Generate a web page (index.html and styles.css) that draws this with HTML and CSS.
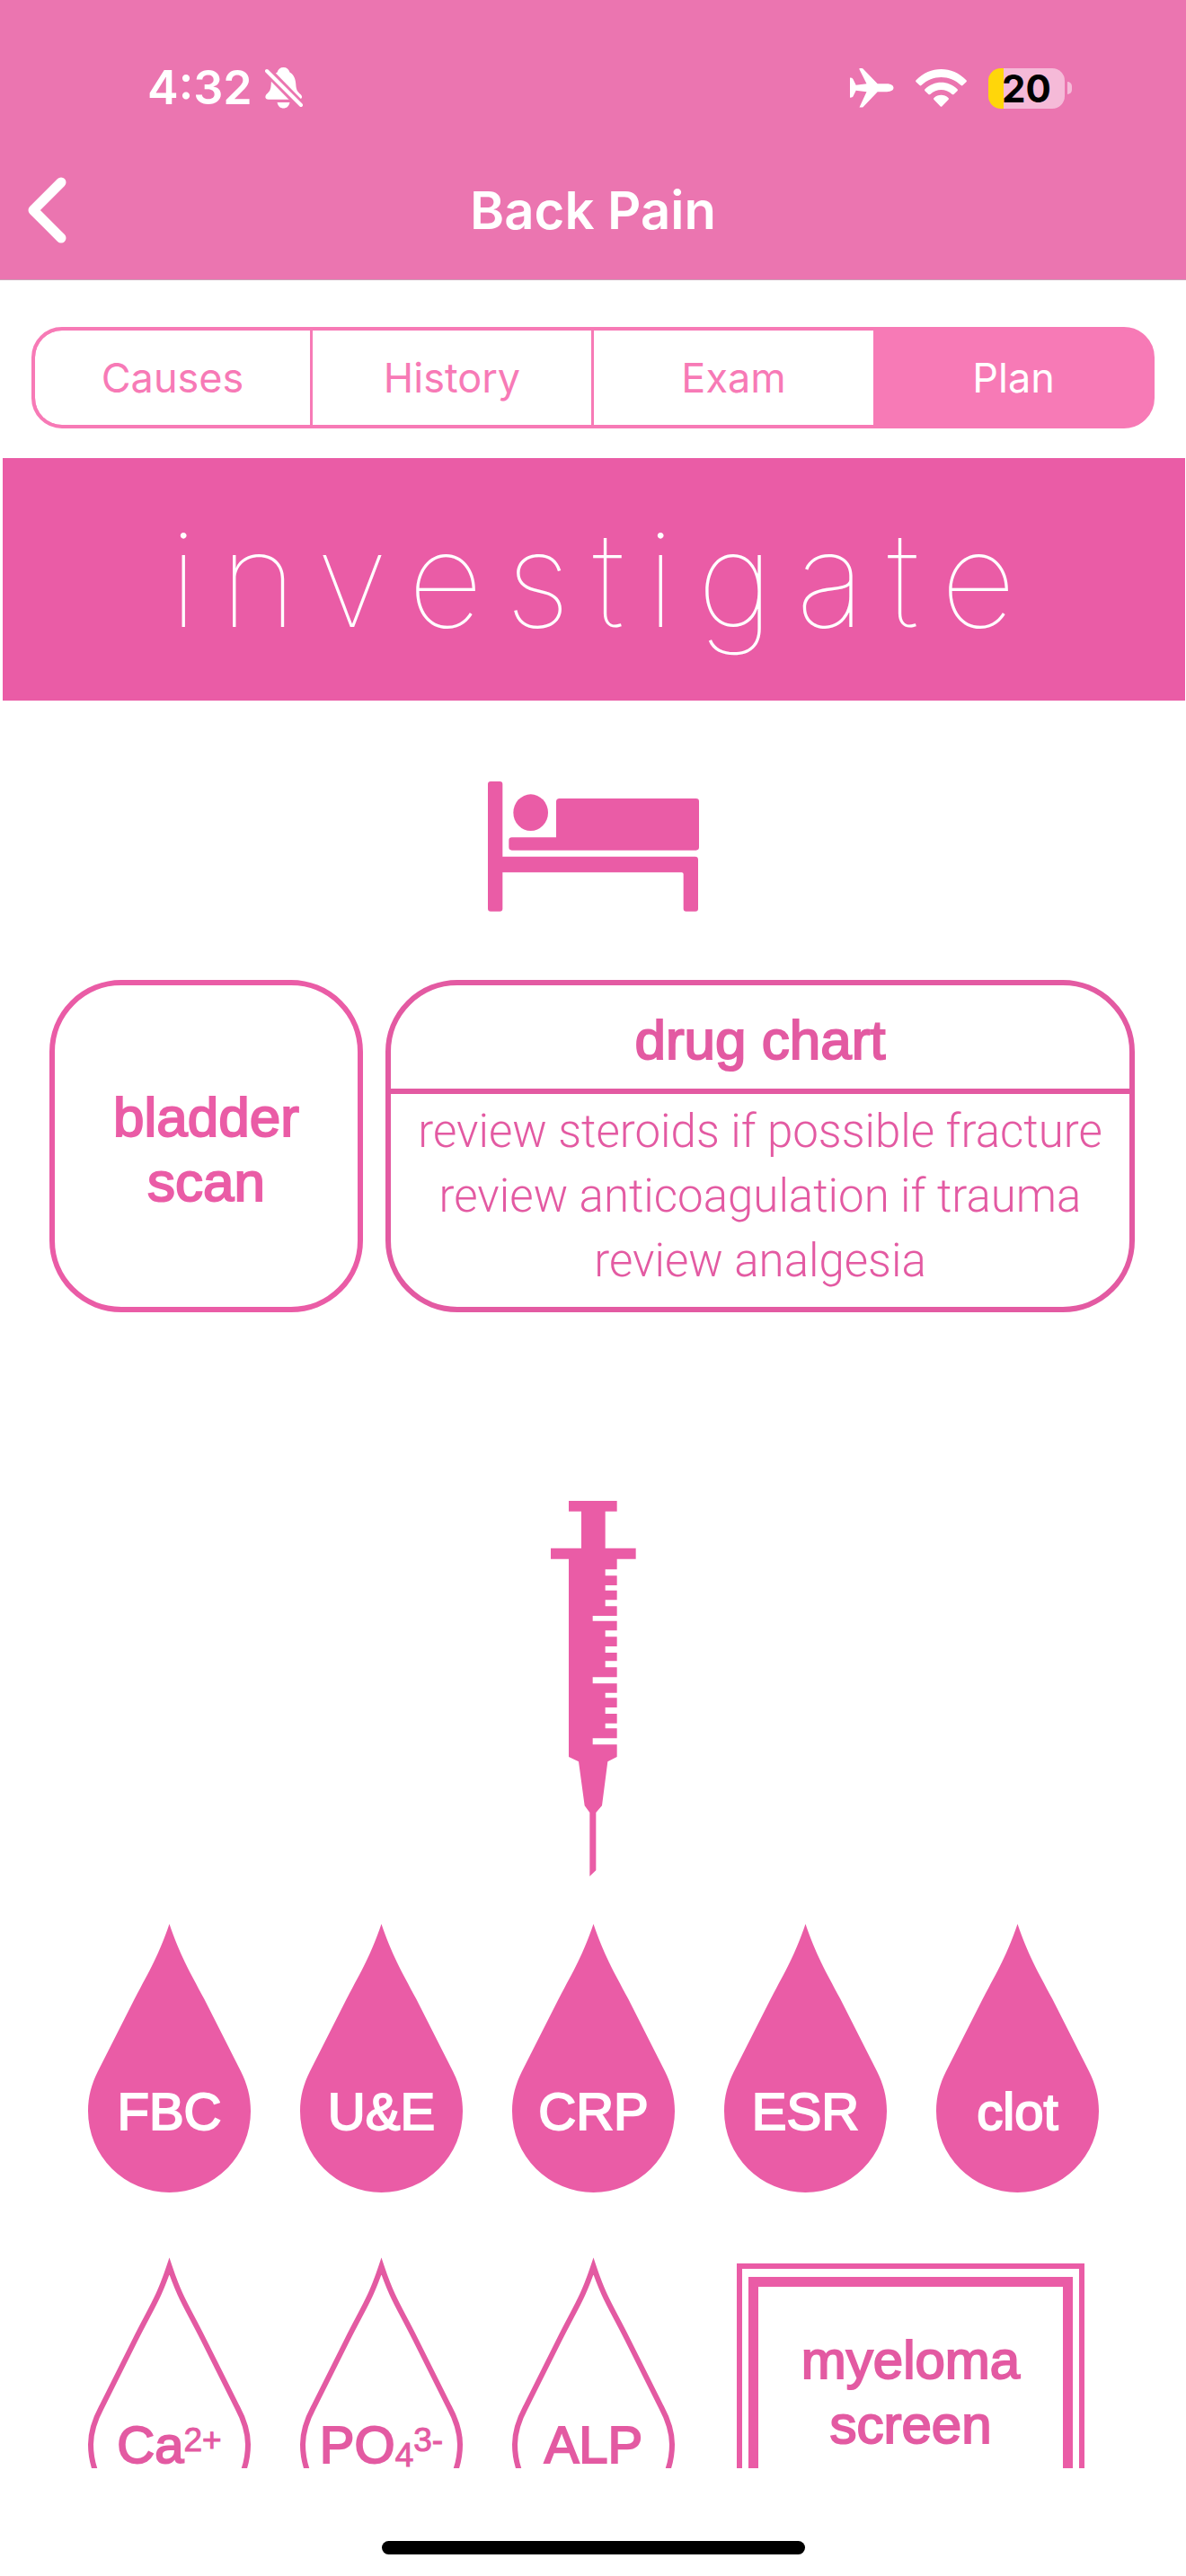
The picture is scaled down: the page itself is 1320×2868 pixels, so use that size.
FILE: index.html
```html
<!DOCTYPE html>
<html lang="en">
<head>
<meta charset="utf-8">
<meta name="viewport" content="width=device-width, initial-scale=1">
<title>Back Pain</title>
<link rel="stylesheet" href="styles.css">
</head>
<body>
<div class="app">
  <header class="header">
    <div class="status">
      <div class="status-group">
        <span class="clock">4:32</span>
        <svg class="bell" viewBox="0 0 42 46" aria-label="Silent mode">
          <path class="white" d="M20.500 0C24 0 26.500 2 27.500 5.500C32 8 34 13 34.300 19C34.600 25 36 27 39.500 30C42 32.500 41.500 35.700 37.500 35.700H4C0 35.700-.5 32.500 1.500 30C5 27 6.400 25 6.700 19C7 13 9 8 13.500 5.500C14.500 2 17 0 20.500 0ZM13.500 39H27.500C26.500 43.500 24 45.500 20.500 45.500S14.500 43.500 13.500 39Z"/>
          <path class="slash-gap" d="M0 1.500L41.500 44"/>
          <path class="slash" d="M2 4L40 42"/>
        </svg>
      </div>
      <div class="status-group status-right">
        <svg class="plane" viewBox="0 0 49 44" aria-label="Airplane mode">
          <path class="white" d="M10.500 0H13Q14.300 0 15.200 1.200L30.700 17.300H41C46 17.300 48.500 19.500 48.500 21.800S46 26.200 41 26.200H30.700L15.200 42.400Q14.300 43.600 13 43.600H10.500L18.500 26.200L6.700 24.800L3.400 31.500Q2.600 32.800 0 32.600V10.600Q2.600 10.600 3.400 12L6.700 18.800L18.500 17.300L10.500 1.200Z"/>
        </svg>
        <svg class="wifi" viewBox="0 0 57 42" aria-label="Wi-Fi">
          <path class="white" d="M.6 12.300C16-4.100 41-4.100 56.400 12.300Q57.400 13.300 56.400 14.300L52.400 18.100Q51.500 18.900 50.600 18C38 6 19 6 6.400 18Q5.500 18.900 4.600 18.100L.6 14.300Q-.4 13.300.6 12.300ZM10.500 22.300C20.500 12.200 36.500 12.200 46.500 22.300Q47.400 23.300 46.500 24.200L42.600 27.900Q41.700 28.700 40.700 27.900C33.500 21.400 23.500 21.400 16.300 27.900Q15.300 28.700 14.400 27.900L10.500 24.200Q9.600 23.300 10.500 22.300ZM20.500 32C25 27.600 32 27.600 36.500 32Q37.400 33 36.500 34L29.500 41.200Q28.500 42.200 27.500 41.200L20.500 34Q19.600 33 20.500 32Z"/>
        </svg>
        <div class="battery">
          <span class="battery-body">20</span>
          <span class="battery-nub"></span>
        </div>
      </div>
    </div>
    <div class="navbar">
      <button class="back" type="button" aria-label="Back">
        <svg class="chevron" viewBox="0 0 44 74"><path d="M38 6L7 37L38 68"/></svg>
      </button>
      <h1 class="title">Back Pain</h1>
    </div>
  </header>

  <nav class="tabs" aria-label="Sections">
    <button class="tab" type="button">Causes</button>
    <button class="tab" type="button">History</button>
    <button class="tab" type="button">Exam</button>
    <button class="tab tab-active" type="button" aria-current="page">Plan</button>
  </nav>

  <main class="content">
    <h2 class="banner">investigate</h2>

    <svg class="bed" viewBox="129 90 705 435" aria-label="Bedside">
      <rect x="129" y="90" width="49" height="434" rx="9"/>
      <ellipse cx="272" cy="194" rx="58" ry="61"/>
      <path d="M368 147H824Q834 147 834 157V310Q834 320 824 320H209Q199 320 199 310V287Q199 277 209 277H357V158Q357 147 368 147Z"/>
      <path d="M170 341H821Q831 341 831 351V515Q831 524 822 524H791Q782 524 782 515V400Q782 394 776 394H170Z"/>
    </svg>

    <div class="cards">
      <section class="card card-scan">
        <h3 class="label">bladder<br>scan</h3>
      </section>
      <section class="card card-drugs">
        <h3 class="label card-title">drug chart</h3>
        <ul class="reviews">
          <li>review steroids if possible fracture</li>
          <li>review anticoagulation if trauma</li>
          <li>review analgesia</li>
        </ul>
      </section>
    </div>

    <svg class="syringe" viewBox="160 93 285 1254" aria-label="Bloods">
      <path d="M220 93H381V128H342V251H444V287H381V322H342V343H381V375H342V392H381V424H342V445H381V477H300V494H381V526H342V547H381V579H342V600H381V628H342V649H381V682H300V703H381V734H342V751H381V783H342V804H381V836H342V853H381V886H300V907H381V948L350 964L331 1111L311 1134V1327L290 1347V1134L273 1111L253 964L220 948V287H160V251H262V128H220Z"/>
    </svg>

    <ul class="drops">
      <li class="drop drop-full">
        <svg viewBox="0 0 181 299" aria-hidden="true"><use href="#drop-fill"/></svg>
        <span class="label">FBC</span>
      </li>
      <li class="drop drop-full">
        <svg viewBox="0 0 181 299" aria-hidden="true"><use href="#drop-fill"/></svg>
        <span class="label">U&amp;E</span>
      </li>
      <li class="drop drop-full">
        <svg viewBox="0 0 181 299" aria-hidden="true"><use href="#drop-fill"/></svg>
        <span class="label">CRP</span>
      </li>
      <li class="drop drop-full">
        <svg viewBox="0 0 181 299" aria-hidden="true"><use href="#drop-fill"/></svg>
        <span class="label">ESR</span>
      </li>
      <li class="drop drop-full">
        <svg viewBox="0 0 181 299" aria-hidden="true"><use href="#drop-fill"/></svg>
        <span class="label">clot</span>
      </li>
    </ul>

    <ul class="drops drops-extra">
      <li class="drop drop-line">
        <svg viewBox="0 0 181 299" aria-hidden="true"><use href="#drop-outline"/></svg>
        <span class="label">Ca<sup>2+</sup></span>
      </li>
      <li class="drop drop-line">
        <svg viewBox="0 0 181 299" aria-hidden="true"><use href="#drop-outline"/></svg>
        <span class="label">PO<sub>4</sub><sup>3-</sup></span>
      </li>
      <li class="drop drop-line">
        <svg viewBox="0 0 181 299" aria-hidden="true"><use href="#drop-outline"/></svg>
        <span class="label">ALP</span>
      </li>
      <li class="frame">
        <div class="frame-inner"><span class="label">myeloma<br>screen</span></div>
      </li>
    </ul>
  </main>

  <footer class="home"><span class="home-bar"></span></footer>
</div>

<svg class="defs" aria-hidden="true">
  <defs>
    <path id="drop-fill" d="M90.500 0C102 34 112 51 129 83L170 164C177 178 181 192 181 208.500A90.500 90.500 0 0 1 0 208.500C0 192 4 178 11 164L52 83C69 51 79 34 90.500 0Z"/>
    <path id="drop-outline" d="M90.500 10C102 45 111 57 128 91L166 167C174 182 178 194 178 208.500A87.500 87.500 0 0 1 3 208.500C3 194 7 182 15 167L53 91C70 57 79 45 90.500 10Z"/>
  </defs>
</svg>
</body>
</html>
```
FILE: styles.css
```css
:root {
  --header: #eb75b0;
  --tab: #f77ab6;
  --pink: #ea5ca6;
  --pink-deep: #e35aa2;
  --ui: Inter, "Liberation Sans", sans-serif;
  --art: "Liberation Sans", Arial, sans-serif;
}

* {
  box-sizing: border-box;
}

body {
  margin: 0;
  background: #fff;
  font-family: var(--ui);
}

h1, h2, h3, ul {
  margin: 0;
  padding: 0;
  list-style: none;
}

button {
  margin: 0;
  padding: 0;
  border: 0;
  background: none;
  font: inherit;
  color: inherit;
}

svg {
  display: block;
}

.defs {
  position: absolute;
  width: 0;
  height: 0;
}

.app {
  display: flex;
  flex-direction: column;
  height: 100vh;
}

/* Header */
.header {
  flex: none;
  background: var(--header);
  border-bottom: 1px solid #c9a3b7;
  color: #fff;
}

.status {
  display: flex;
  align-items: center;
  justify-content: space-between;
  height: 156px;
  padding: 40px 127px 0 164px;
}

.status-group {
  display: flex;
  align-items: center;
  gap: 14px;
}

.status-right {
  gap: 24px;
}

.clock {
  font-size: 52px;
  font-weight: 600;
  line-height: 60px;
}

.white {
  fill: #fff;
}

.bell {
  width: 42px;
  height: 46px;
}

.slash,
.slash-gap {
  fill: none;
  stroke: #fff;
  stroke-width: 4;
  stroke-linecap: round;
}

.slash-gap {
  stroke: var(--header);
  stroke-width: 10;
  stroke-linecap: butt;
}

.plane {
  width: 49px;
  height: 44px;
}

.wifi {
  width: 57px;
  height: 42px;
}

.battery {
  display: flex;
  align-items: center;
  gap: 3px;
}

.battery-body {
  width: 85px;
  height: 45px;
  border-radius: 14px;
  background: linear-gradient(to right, #ffd60a 17px, #f5bad8 17px);
  color: #000;
  font-size: 42px;
  font-weight: 700;
  line-height: 45px;
  text-align: center;
}

.battery-nub {
  width: 5px;
  height: 14px;
  border-radius: 0 5px 5px 0;
  background: #f5bad8;
}

.navbar {
  display: grid;
  grid-template-columns: 1fr auto 1fr;
  align-items: center;
  height: 155px;
}

.back {
  justify-self: start;
  padding-left: 30px;
}

.chevron {
  width: 44px;
  height: 74px;
  fill: none;
  stroke: #fff;
  stroke-width: 11;
  stroke-linecap: round;
  stroke-linejoin: round;
}

.title {
  font-size: 58px;
  font-weight: 600;
  line-height: 72px;
}

/* Segmented control */
.tabs {
  flex: none;
  display: grid;
  grid-template-columns: 306fr 313fr 314fr 309fr;
  height: 113px;
  margin: 52px 35px 33px;
  border: 4px solid var(--tab);
  border-radius: 34px;
  background: var(--tab);
  overflow: hidden;
}

.tab {
  background: #fff;
  color: var(--tab);
  font-size: 45px;
}

.tab:first-child {
  border-radius: 30px 0 0 30px;
}

.tab + .tab {
  border-left: 3px solid var(--tab);
}

.tab.tab-active {
  background: var(--tab);
  color: #fff;
}

/* Content */
.content {
  flex: 1;
  min-height: 0;
  overflow-y: auto;
  scrollbar-width: none;
}

.banner {
  display: flex;
  align-items: center;
  justify-content: center;
  height: 270px;
  margin: 0 1px 90px 3px;
  padding-left: 22px;
  background: var(--pink);
  color: #fff;
  font-size: 146px;
  font-weight: 100;
  letter-spacing: 25px;
}

.bed,
.syringe {
  margin: 0 auto;
  fill: var(--pink);
}

.bed {
  width: 235px;
  height: 145px;
}

.syringe {
  width: 95px;
  height: 418px;
}

.label {
  font-family: var(--art);
  font-size: 60px;
  font-weight: 400;
  line-height: 72px;
  text-align: center;
  -webkit-text-stroke: 2px currentColor;
}

.cards {
  display: grid;
  grid-template-columns: 349fr 834fr;
  gap: 25px;
  min-height: 370px;
  margin: 76px 57px 210px 55px;
}

.card {
  border: 6px solid currentColor;
  border-radius: 80px;
}

.card .label {
  font-size: 62px;
}

.card-scan {
  display: flex;
  align-items: center;
  justify-content: center;
  padding-top: 8px;
  color: var(--pink);
}

.card-drugs {
  color: var(--pink-deep);
}

.card-title {
  padding: 25px 0 18px;
  border-bottom: 6px solid currentColor;
}

.reviews {
  padding-top: 6px;
  font-family: Roboto, var(--art);
  font-size: 51px;
  font-weight: 300;
  line-height: 72px;
  text-align: center;
}

/* Blood tests */
.drops {
  display: grid;
  grid-template-columns: repeat(5, 181px);
  justify-content: space-between;
  margin: 53px 97px 0 98px;
}

.drops-extra {
  margin-top: 72px;
}

.drop {
  display: grid;
}

.drop > * {
  grid-area: 1 / 1;
}

.drop .label {
  padding-top: 173px;
  font-size: 58px;
}

.drop svg {
  width: 100%;
}

.drop-full {
  color: #fff;
  fill: var(--pink);
}

.drop-line {
  color: var(--pink-deep);
  fill: none;
}

.drop-line svg {
  stroke: var(--pink-deep);
  stroke-width: 6;
  stroke-miterlimit: 8;
}

sup,
sub {
  font-size: 37px;
  line-height: 0;
  -webkit-text-stroke-width: 1px;
}

sup {
  vertical-align: 13px;
}

sub {
  vertical-align: -4px;
}

.frame {
  grid-column: span 2;
  margin: 7px 16px 0 14px;
  padding: 9px 7px;
  border: 6px solid var(--pink);
}

.frame-inner {
  display: flex;
  justify-content: center;
  height: 100%;
  padding-top: 46px;
  border: 11px solid var(--pink);
  color: var(--pink-deep);
}

/* Home indicator */
.home {
  flex: none;
  display: flex;
  align-items: flex-end;
  justify-content: center;
  height: 120px;
  padding-bottom: 24px;
}

.home-bar {
  width: 471px;
  height: 15px;
  border-radius: 8px;
  background: #000;
}
```
